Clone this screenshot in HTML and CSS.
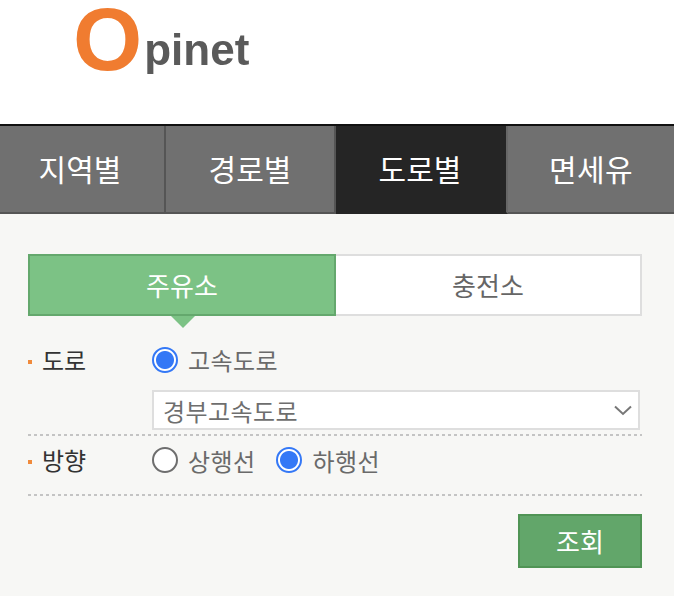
FILE: index.html
```html
<!DOCTYPE html>
<html lang="ko">
<head>
  <meta charset="UTF-8" />
  <title>Opinet</title>
  <meta name="viewport" content="width=device-width, initial-scale=1.0" />
  <link rel="stylesheet" href="styles.css">
</head>
<body>
  <!-- 로고 -->
  <header class="top">
    <div class="logo"><span class="logo-o">O</span><span class="logo-text">pinet</span></div>
  </header>

  <!-- 메인 탭 -->
  <nav class="tabs">
    <a class="tab tab-1">지역별</a>
    <a class="tab tab-2">경로별</a>
    <a class="tab tab-3 on">도로별</a>
    <a class="tab tab-4">면세유</a>
  </nav>

  <main class="content">
    <!-- 주유소 / 충전소 -->
    <div class="kind">
      <a class="kind-item on">주유소</a>
      <a class="kind-item">충전소</a>
    </div>

    <!-- 도로 -->
    <div class="row row-road">
      <div class="label">도로</div>
      <div class="field">
        <label class="radio"><input type="radio" name="road" checked> 고속도로</label>
        <div class="select-wrap">
          <select class="select">
            <option>경부고속도로</option>
          </select>
          <svg class="chevron" width="18" height="11" viewBox="0 0 18 11"><path d="M1 1.5 L9 9 L17 1.5" fill="none" stroke="#777" stroke-width="2"/></svg>
        </div>
      </div>
    </div>

    <!-- 방향 -->
    <div class="row row-dir">
      <div class="label">방향</div>
      <div class="field field-inline">
        <label class="radio"><input type="radio" name="dir"> 상행선</label>
        <label class="radio"><input type="radio" name="dir" checked> 하행선</label>
      </div>
    </div>

    <div class="actions">
      <button class="btn" type="button">조회</button>
    </div>
  </main>
</body>
</html>
```

FILE: styles.css
```css
/* 기본 */
* {
  box-sizing: border-box;
}
html, body {
  height: 100%;
}
body {
  margin: 0;
  background: #f7f7f5;
  font-family: "Noto Sans CJK KR", "Liberation Sans", sans-serif;
  color: #222;
  overflow: hidden;
}

/* 로고 */
.top {
  height: 124px;
  background: #fff;
  padding: 0 0 0 73px;
}
.logo {
  display: flex;
  align-items: flex-start;
  font-family: "Liberation Sans", sans-serif;
  font-weight: bold;
  filter: blur(0.7px);
}
.logo-o {
  color: #f07c30;
  font-size: 89px;
  line-height: 78px;
}
.logo-text {
  color: #5a5a5a;
  font-size: 44px;
  line-height: 50px;
  margin-top: 25px;
  margin-left: 2px;
}

/* 메인 탭 */
.tabs {
  display: flex;
  height: 90px;
  border-top: 2px solid #111;
}
.tab {
  display: flex;
  align-items: center;
  justify-content: center;
  height: 88px;
  padding-bottom: 2px;
  background: #707070;
  border-bottom: 2px solid #555;
  border-right: 2px solid #555;
  color: #fff;
  font-size: 30px;
}
.tab-1 { width: 166px; padding-right: 4px; }
.tab-2 { width: 170px; }
.tab-3 { width: 172px; padding-right: 2px; }
.tab-4 { width: 166px; border-right: none; letter-spacing: 0.4px; }
.tab.on {
  background: #252525;
  border-bottom-color: #252525;
  border-right-color: #666;
}

.content {
  padding: 40px 32px 0 28px;
}

/* 주유소 / 충전소 */
.kind {
  display: flex;
  height: 62px;
  margin-bottom: 20px;
}
.kind-item {
  display: flex;
  align-items: center;
  justify-content: center;
  flex: 1;
  padding-bottom: 2px;
  background: #fff;
  border: 2px solid #dedede;
  border-left: none;
  color: #666;
  font-size: 26px;
}
.kind-item.on {
  position: relative;
  flex: 0 0 308px;
  background: #7cc285;
  border: 2px solid #64a86d;
  color: #fff;
}
.kind-item.on::after {
  content: "";
  position: absolute;
  left: 141px;
  top: 60px;
  border-top: 12px solid #7cc285;
  border-left: 12px solid transparent;
  border-right: 12px solid transparent;
}

/* 폼 행 */
.row {
  display: flex;
  padding-bottom: 2px;
  background: repeating-linear-gradient(to right, #c4c4c4 0 3px, transparent 3px 6px) left bottom / 100% 2px no-repeat;
}
.row-road {
  height: 100px;
}
.row-dir {
  height: 60px;
}
.label {
  position: relative;
  width: 124px;
  padding-left: 14px;
  font-size: 24px;
  line-height: 48px;
  color: #333;
}
.label::before {
  content: "";
  position: absolute;
  left: 0;
  top: 24px;
  width: 4px;
  height: 4px;
  background: #f08a3c;
}
.field {
  flex: 1;
}
.field-inline {
  display: flex;
  gap: 21px;
}

/* 라디오 */
.radio {
  display: flex;
  align-items: center;
  gap: 10px;
  height: 47px;
  color: #6a6a6a;
  font-size: 24px;
  letter-spacing: 0.4px;
}
.field-inline .radio {
  height: 48px;
}
.radio input {
  appearance: none;
  flex: none;
  width: 26px;
  height: 26px;
  margin: 0;
  background: #fff;
  border: 2px solid #6e6e6e;
  border-radius: 50%;
}
.radio input:checked {
  background: radial-gradient(circle, #3478f6 0 8.5px, #fff 9.5px);
  border-color: #3478f6;
}

/* 셀렉트 */
.select-wrap {
  position: relative;
  width: 488px;
  margin-top: 7px;
}
.select {
  appearance: none;
  display: block;
  width: 100%;
  height: 40px;
  padding: 0 40px 0 9px;
  background: #fff;
  border: 2px solid #dedede;
  border-radius: 0;
  color: #6e6e6e;
  font-family: inherit;
  font-size: 24px;
  letter-spacing: 0.4px;
}
.chevron {
  position: absolute;
  right: 8px;
  top: 15px;
}

/* 버튼 */
.actions {
  display: flex;
  justify-content: flex-end;
  padding-top: 18px;
}
.btn {
  width: 124px;
  height: 54px;
  padding: 0 0 2px;
  background: #62a66a;
  border: 2px solid #509455;
  border-radius: 0;
  color: #fff;
  font-family: inherit;
  font-size: 26px;
}
```
